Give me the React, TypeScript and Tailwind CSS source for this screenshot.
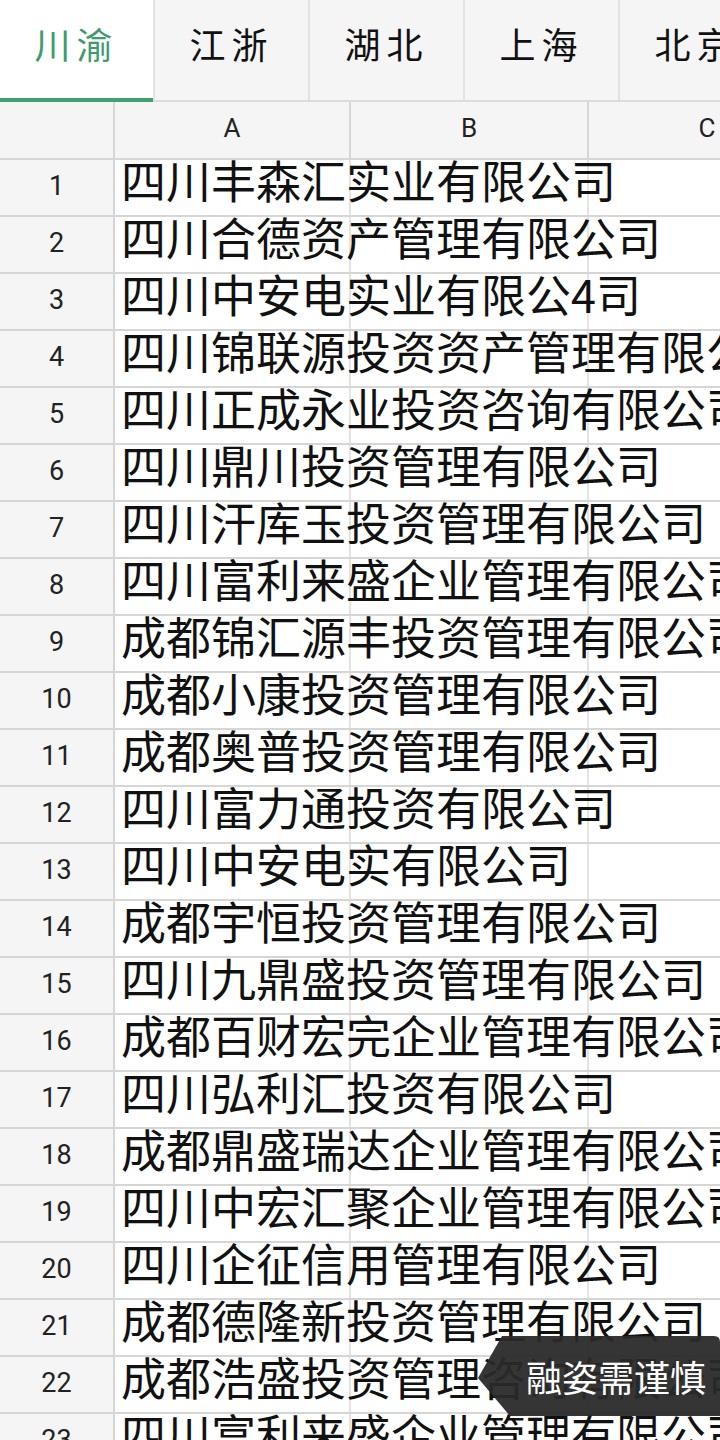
import React from "react";

const tabs = ["川渝", "江浙", "湖北", "上海", "北京"];

const rows = [
  "四川丰森汇实业有限公司",
  "四川合德资产管理有限公司",
  "四川中安电实业有限公4司",
  "四川锦联源投资资产管理有限公司",
  "四川正成永业投资咨询有限公司",
  "四川鼎川投资管理有限公司",
  "四川汗库玉投资管理有限公司",
  "四川富利来盛企业管理有限公司",
  "成都锦汇源丰投资管理有限公司",
  "成都小康投资管理有限公司",
  "成都奥普投资管理有限公司",
  "四川富力通投资有限公司",
  "四川中安电实有限公司",
  "成都宇恒投资管理有限公司",
  "四川九鼎盛投资管理有限公司",
  "成都百财宏完企业管理有限公司",
  "四川弘利汇投资有限公司",
  "成都鼎盛瑞达企业管理有限公司",
  "四川中宏汇聚企业管理有限公司",
  "四川企征信用管理有限公司",
  "成都德隆新投资管理有限公司",
  "成都浩盛投资管理咨询有限公司",
  "四川富利来盛企业管理有限公司",
];

const font = "font-['Roboto','Noto_Sans_CJK_SC',sans-serif]";

export default function App() {
  return (
    <div className={`relative w-[720px] h-[1440px] overflow-hidden bg-white ${font}`}>
      {/* sheet tabs */}
      <div className="flex h-[102px] bg-[#f5f5f5] border-b-2 border-[#dcdcdc]">
        {tabs.map((t, i) => (
          <div
            key={t}
            className={`relative shrink-0 w-[155px] flex items-center justify-center border-r-2 border-[#e2e2e2] text-[36px] tracking-[6px] pb-[14px] font-['Noto_Sans_CJK_SC',serif] ${
              i === 0 ? "bg-white text-[#3d9b6c]" : "text-[#111]"
            }`}
          >
            {t}
            {i === 0 && <div className="absolute left-0 right-0 bottom-[-2px] h-[4px] bg-[#3ea06e]" />}
          </div>
        ))}
      </div>

      {/* column header */}
      <div className="flex h-[58px] border-b-2 border-[#d6d6d6] bg-[#f5f5f5] text-[26px] text-[#222]">
        <div className="shrink-0 w-[115px] border-r-2 border-[#d6d6d6]" />
        <div className="shrink-0 w-[236px] border-r-2 border-[#d6d6d6] flex items-center justify-center pb-[4px]">A</div>
        <div className="shrink-0 w-[238px] border-r-2 border-[#d6d6d6] flex items-center justify-center pb-[4px]">B</div>
        <div className="shrink-0 w-[236px] flex items-center justify-center pb-[4px]">C</div>
      </div>

      {/* rows */}
      <div className="flex flex-col">
        {rows.map((name, i) => (
          <div key={i} className="relative flex h-[57px] border-b-2 border-[#d6d6d6]">
            <div className="shrink-0 w-[115px] bg-[#f5f5f5] border-r-2 border-[#d6d6d6] flex items-center justify-center text-[27px] text-[#222] pb-[2px]">
              {i + 1}
            </div>
            <div className="shrink-0 w-[236px] border-r-2 border-[#e4e4e4]" />
            <div className="shrink-0 w-[238px] border-r-2 border-[#e4e4e4]" />
            <div className="absolute left-[121px] top-[-5px] whitespace-nowrap text-[45px] leading-[50px] text-[#111] font-['Noto_Sans_CJK_SC',sans-serif]">
              {name}
            </div>
          </div>
        ))}
      </div>

      {/* toast */}
      <div className="absolute left-[478px] top-[1336px] w-[242px] h-[80px]">
        <svg className="absolute inset-0" width="242" height="80" viewBox="0 0 242 80">
          <path d="M24 0 H236 Q242 0 242 6 V80 H32 L0 42 Z" fill="#2a2a2a" fillOpacity="0.95" />
        </svg>
        <div className="relative h-full flex items-center pl-[48px] text-[36px] text-white font-['Noto_Sans_CJK_SC',sans-serif]">
          融姿需谨慎
        </div>
      </div>
    </div>
  );
}
